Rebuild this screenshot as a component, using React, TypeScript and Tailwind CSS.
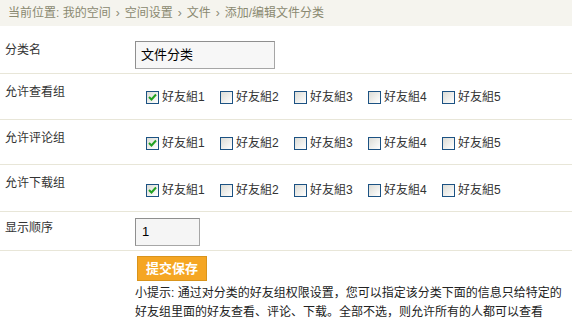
const groups = ["好友組1", "好友組2", "好友組3", "好友組4", "好友組5"];

function Box({ checked }: { checked: boolean }) {
  return (
    <span className="flex h-[13px] w-[13px] shrink-0 items-center justify-center border border-[#1c5283] bg-gradient-to-br from-[#dcdcd6] to-white">
      {checked && (
        <svg width="9" height="8" viewBox="0 0 9 8">
          <path d="M1 4 L3.5 6.5 L8 1.5" fill="none" stroke="#21a121" strokeWidth="2" />
        </svg>
      )}
    </span>
  );
}

function GroupRow({ label, h, top }: { label: string; h: string; top: string }) {
  return (
    <div className={`flex border-b border-[#e8e6d8] ${h}`}>
      <div className="w-[135px] pl-[5px] pt-[9px]">{label}</div>
      <div className={`flex pl-[11px] ${top}`}>
        {groups.map((g, i) => (
          <label key={g} className="flex h-[18px] w-[74px] items-center gap-[3px]">
            <Box checked={i === 0} />
            <span>{g}</span>
          </label>
        ))}
      </div>
    </div>
  );
}

export default function App() {
  return (
    <div
      className="h-[320px] w-[572px] overflow-hidden bg-white text-[12px] leading-[18px] text-[#333]"
      style={{ fontFamily: '"Liberation Sans", "Noto Sans CJK SC", sans-serif' }}
    >
      <div className="flex h-[26px] items-center bg-[#f5f4ee] pl-[8px] text-[#8a8970]">
        当前位置: 我的空间 <span className="mx-[5px]">›</span> 空间设置 <span className="mx-[5px]">›</span> 文件
        <span className="mx-[5px]">›</span> 添加/编辑文件分类
      </div>

      <div className="flex h-[48px] border-b border-[#e8e6d8]">
        <div className="w-[135px] pl-[5px] pt-[15px]">分类名</div>
        <div className="pt-[15px]">
          <div className="flex h-[28px] w-[140px] items-center border border-[#a6a6a6] border-t-[#8f8f8f] border-l-[#8f8f8f] bg-[#f7f7f7] pl-[5px] text-[13px] text-black">
            文件分类
          </div>
        </div>
      </div>

      <GroupRow label="允许查看组" h="h-[46px]" top="pt-[14px]" />
      <GroupRow label="允许评论组" h="h-[45px]" top="pt-[14px]" />
      <GroupRow label="允许下载组" h="h-[47px]" top="pt-[16px]" />

      <div className="flex h-[39px] border-b border-[#e8e6d8]">
        <div className="w-[135px] pl-[5px] pt-[7px]">显示顺序</div>
        <div className="pt-[6px]">
          <div className="flex h-[28px] w-[65px] items-center border border-[#a6a6a6] border-t-[#8f8f8f] border-l-[#8f8f8f] bg-[#f5f5f5] pl-[6px] text-[13px] text-black">
            1
          </div>
        </div>
      </div>

      <div className="pl-[135px] pt-[5px]">
        <button className="ml-[2px] flex h-[25px] w-[70px] items-center justify-center border border-[#d9941c] bg-[#f5a623] text-[13px] font-bold text-white">
          提交保存
        </button>
        <p className="mt-[3px] leading-[19px] text-[#222]">
          小提示: 通过对分类的好友组权限设置，您可以指定该分类下面的信息只给特定的好友组里面的好友查看、评论、下载。全部不选，则允许所有的人都可以查看
        </p>
      </div>
    </div>
  );
}
